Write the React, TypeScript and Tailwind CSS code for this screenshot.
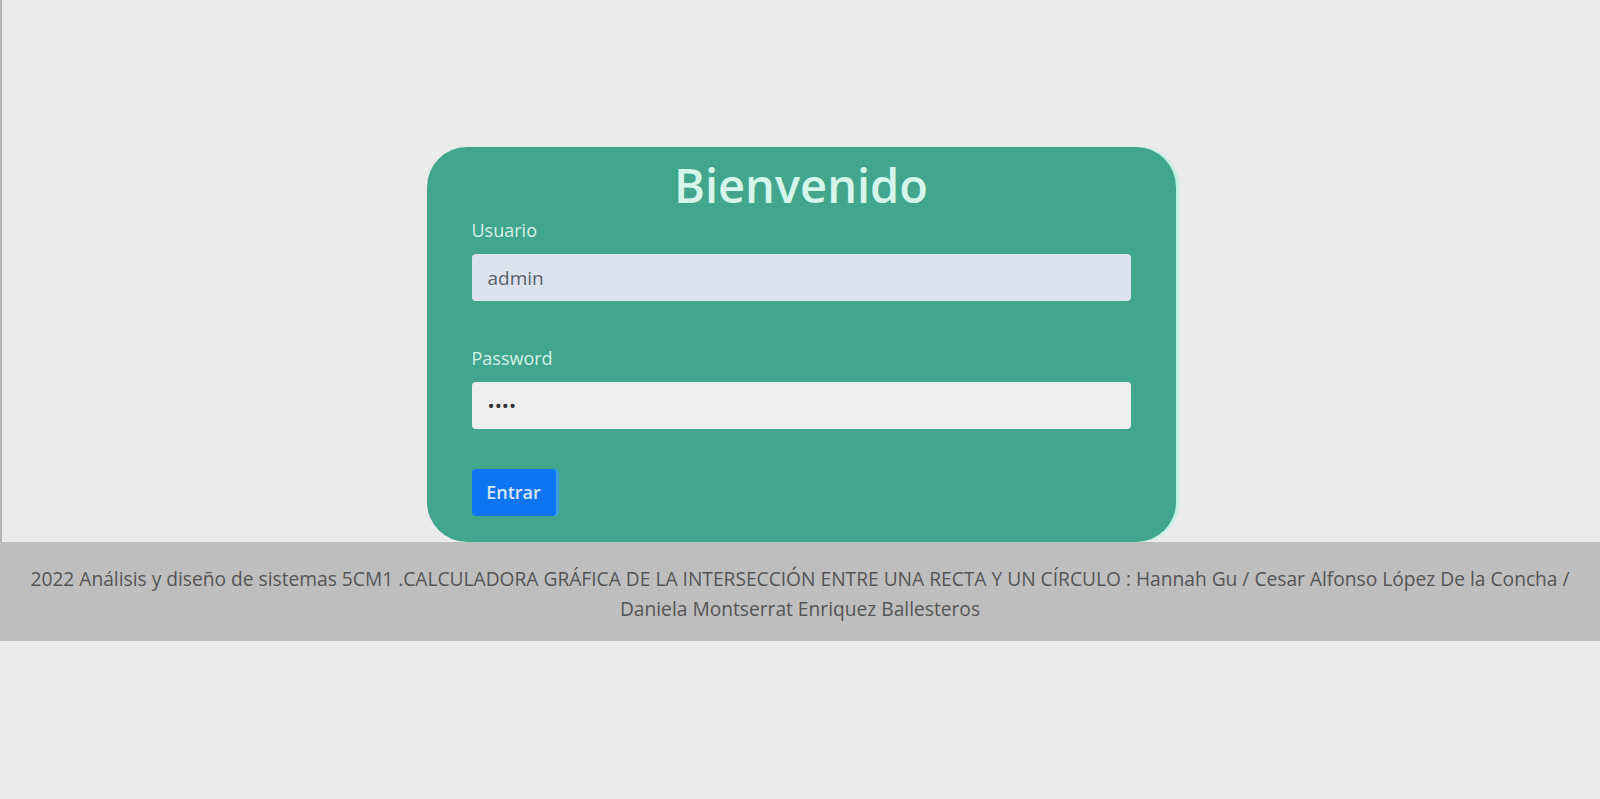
import React from 'react';

const font = { fontFamily: '"Open Sans", "Noto Sans", sans-serif' };

const Field: React.FC<{ label: string; value: string; type?: string; bg: string; color: string; mt: string }> = ({ label, value, type = 'text', bg, color, mt }) => (
  <div className={mt}>
    <label className="block text-[18px] leading-[24px] text-[#d3f2e8]">{label}</label>
    <input
      type={type}
      readOnly
      value={value}
      className={`mt-[12px] block w-full h-[47px] rounded-[4px] px-[16px] text-[19px] outline-none ${bg} ${color}`}
    />
  </div>
);

export default function App() {
  return (
    <div className="min-h-[799px] w-full bg-[#ebebeb]" style={font}>
      <div className="border-l-2 border-[#b4b4b4] pt-[147px]">
        <div className="mx-auto w-[749px] h-[395px] rounded-[40px] bg-[#42a68c] px-[45px] pt-[11px] shadow-[3px_0_2px_rgba(175,245,225,0.85)]">
          <h1 className="text-center text-[47px] leading-[54px] font-semibold text-[#d6f6ec]">Bienvenido</h1>
          <Field label="Usuario" value="admin" bg="bg-[#dce2ee]" color="text-[#5b5f6b]" mt="mt-[6px]" />
          <Field label="Password" value="1234" type="password" bg="bg-[#eeeeee]" color="text-[#333]" mt="mt-[45px]" />
          <button className="mt-[40px] h-[47px] w-[84px] rounded-[4px] bg-[#0f74f4] text-[18px] font-semibold text-[#d4e8ff] shadow-[3px_0_0_#3aa0e0]">
            Entrar
          </button>
        </div>
      </div>
      <footer className="h-[99px] w-full bg-[#bebebe] px-[20px] pt-[22px] pb-[17px] text-center text-[19.2px] leading-[30px] text-[#555]">
        2022 Análisis y diseño de sistemas 5CM1 .CALCULADORA GRÁFICA DE LA INTERSECCIÓN ENTRE UNA RECTA Y UN CÍRCULO : Hannah Gu / Cesar Alfonso López De la Concha / Daniela Montserrat Enriquez Ballesteros
      </footer>
    </div>
  );
}
